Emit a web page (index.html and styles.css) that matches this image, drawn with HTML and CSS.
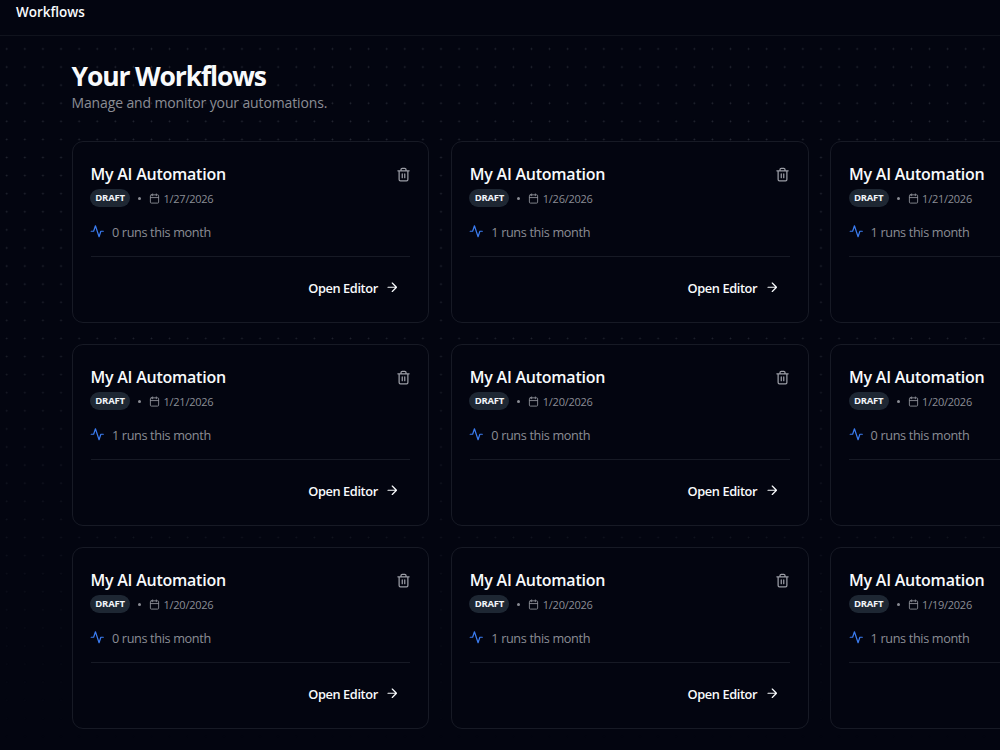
FILE: index.html
```html
<!DOCTYPE html>
<html lang="en">
<head>
<meta charset="utf-8">
<title>Workflows</title>
<link rel="stylesheet" href="styles.css">
</head>
<body>
<svg class="sprite" aria-hidden="true">
  <symbol id="trash" viewBox="0 0 24 24"><path d="M10 11v6M14 11v6M19 6v14a2 2 0 0 1-2 2H7a2 2 0 0 1-2-2V6M3 6h18M8 6V4a2 2 0 0 1 2-2h4a2 2 0 0 1 2 2v2"/></symbol>
  <symbol id="calendar" viewBox="0 0 24 24"><path d="M8 2v4M16 2v4M3 10h18"/><rect x="3" y="4" width="18" height="18" rx="2"/></symbol>
  <symbol id="activity" viewBox="0 0 24 24"><path d="M22 12h-4l-3 9L9 3l-3 9H2"/></symbol>
  <symbol id="arrow" viewBox="0 0 24 24"><path d="M5 12h14M12 5l7 7-7 7"/></symbol>
</svg>
<header class="topbar"><span class="crumb">Workflows</span></header>
<main class="page">
  <h1 class="heading">Your Workflows</h1>
  <p class="lead">Manage and monitor your automations.</p>
  <section class="grid" id="grid"></section>
</main>
<script src="app.js"></script>
</body>
</html>
```
FILE: styles.css
```css
* { box-sizing: border-box; }
body {
  margin: 0;
  height: 750px;
  overflow: hidden;
  background: #030510;
  color: #f8fafc;
  font-family: "Open Sans", "Noto Sans", sans-serif;
}
.sprite { display: none; }
svg { fill: none; stroke: currentColor; stroke-width: 2; stroke-linecap: round; stroke-linejoin: round; flex: none; }
.topbar {
  height: 36px;
  padding: 2px 0 0 16px;
  border-bottom: 1px solid #10131d;
}
.crumb { display: block; font-size: 13.5px; line-height: 20px; font-weight: 650; letter-spacing: -0.02px; }
.page {
  position: relative;
  height: 714px;
  padding: 24px 0 0 71.5px;
  overflow: hidden;
}
.page::before {
  content: "";
  position: absolute;
  inset: 0;
  background-image: radial-gradient(circle, #272a35 0.7px, transparent 1.1px);
  background-size: 18.1px 18.1px;
  background-position: -2.3px 3.9px;
  -webkit-mask-image: linear-gradient(#000 0%, #000 30%, transparent 100%);
  mask-image: linear-gradient(#000 0%, #000 30%, transparent 100%);
}
.heading { position: relative; margin: 0; font-size: 26.5px; line-height: 33px; font-weight: 700; letter-spacing: -1.15px; }
.lead { position: relative; margin: 0; font-size: 14px; line-height: 20px; letter-spacing: -0.13px; color: #8b8d95; }
.grid {
  position: relative;
  display: grid;
  grid-template-columns: repeat(3, 357.8px);
  grid-auto-rows: 182px;
  gap: 21px 21.5px;
  margin-top: 28px;
}
.card {
  padding: 20.5px 18px 18px;
  border: 1px solid #171a25;
  border-radius: 11px;
  background: #030510;
}
.card-head { display: flex; justify-content: space-between; }
.title { margin: 0; font-size: 16px; line-height: 23px; font-weight: 650; letter-spacing: -0.24px; white-space: nowrap; }
.trash { width: 15px; height: 15px; margin: 4.5px -0.5px 0 0; color: #9b9da5; }
.meta { display: flex; align-items: center; height: 18px; margin-top: 3.5px; font-size: 11px; letter-spacing: -0.25px; color: #8b8d95; }
.badge {
  width: 40px;
  height: 18px;
  margin-left: -0.5px;
  border-radius: 9px;
  background: #1e2733;
  color: #f1f5f9;
  font-size: 9.5px;
  line-height: 18px;
  font-weight: 700;
  text-align: center;
}
.bullet { width: 3px; height: 3px; margin: 1px 8px 0 8px; border-radius: 50%; background: #8b8d95; }
.calendar { width: 11px; height: 11px; margin-right: 3.5px; }
.runs { display: flex; align-items: center; gap: 7px; height: 20px; margin-top: 15px; font-size: 12.7px; letter-spacing: -0.36px; color: #8b8d95; }
.activity { width: 14.5px; height: 14.5px; margin: -1px 0 0 -0.5px; color: #3b7cf0; }
.count { padding-left: 0.5px; }
.foot {
  display: flex;
  justify-content: flex-end;
  align-items: center;
  gap: 7.5px;
  height: 63px;
  margin-top: 14px;
  padding-right: 10.5px;
  border-top: 1px solid #171a25;
  font-size: 12.8px;
  font-weight: 650;
  letter-spacing: -0.4px;
}
.arrow { width: 14.5px; height: 14.5px; margin-top: -1px; }
```
FILE: app.js
```js
const workflows = [
  ["1/27/2026", 0], ["1/26/2026", 1], ["1/21/2026", 1],
  ["1/21/2026", 1], ["1/20/2026", 0], ["1/20/2026", 0],
  ["1/20/2026", 0], ["1/20/2026", 1], ["1/19/2026", 1]
];
const icon = name => `<svg class="${name}" viewBox="0 0 24 24"><use href="#${name}"/></svg>`;
document.getElementById("grid").innerHTML = workflows.map(([date, runs]) => `
  <article class="card">
    <div class="card-head"><h2 class="title">My AI Automation</h2>${icon("trash")}</div>
    <div class="meta"><span class="badge">DRAFT</span><i class="bullet"></i>${icon("calendar")}<span class="date">${date}</span></div>
    <div class="runs">${icon("activity")}<span class="count">${runs} runs this month</span></div>
    <div class="foot"><span class="open">Open Editor</span>${icon("arrow")}</div>
  </article>`).join("");
```
